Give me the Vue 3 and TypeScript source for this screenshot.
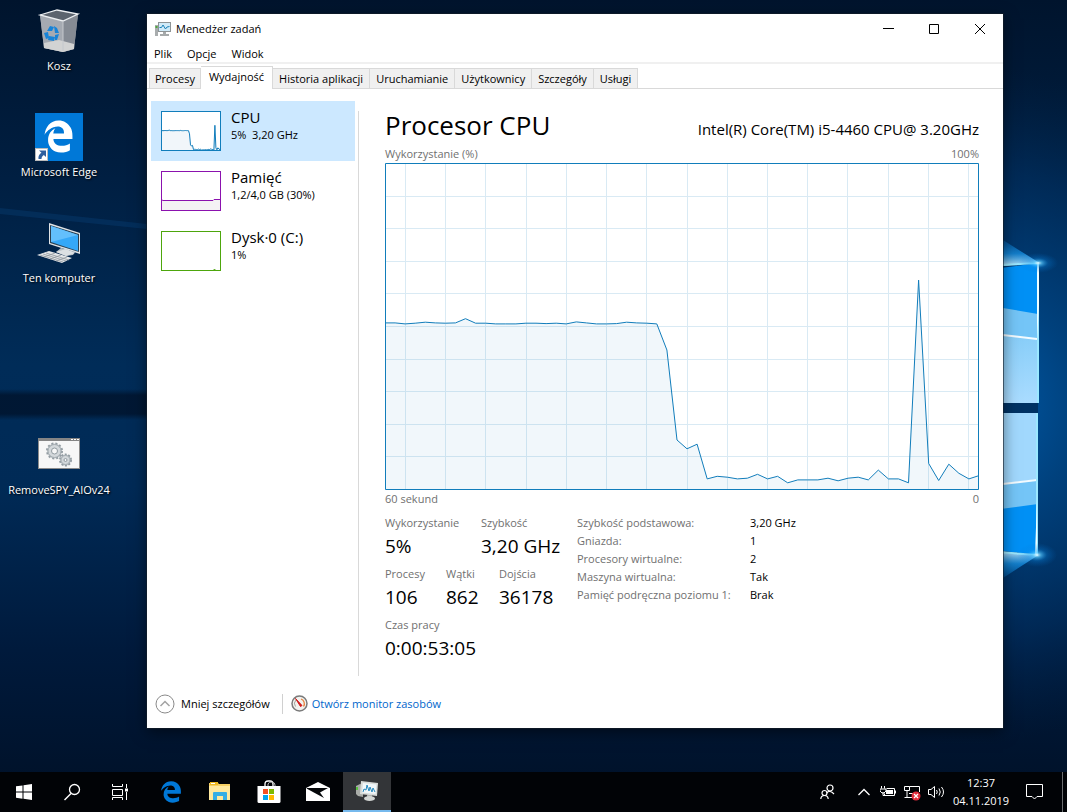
<script setup lang="ts">
import { ref } from 'vue'

interface Resource {
  name: string
  detail: string
  kind: 'cpu' | 'memory' | 'disk'
  line: string
  area: string
}

interface Stat {
  label: string
  value: string
}

const edgePath =
  'M486.286 243.671c0-44.032-7.754-84.465-28.801-122.405C416.498 47.879 343.912 8.001 258.893 8.001 118.962 7.724 40.617 113.214 26.056 227.679c42.429-61.312 117.073-121.376 220.375-124.966 0 0 109.666 0 99.419 104.957H169.997c6.369-37.386 18.554-58.986 34.339-78.926-75.048 34.893-121.85 96.096-120.742 188.315.83 71.448 50.124 144.836 120.743 171.976 83.357 31.843 192.776 7.2 240.132-21.321V363.307c-80.864 56.494-270.871 60.925-272.255-67.572h314.073v-52.064z'

const load: number[] = [
  51.1, 51.1, 50.8, 51, 51.3, 51.1, 51, 51.1, 52.4, 51, 51, 50.8, 50.8, 50.8, 51, 51, 50.9, 51, 50.8, 51.4,
  51.1, 50.8, 50.8, 50.9, 51.3, 51.1, 51, 50.8, 42.8, 15.3, 12.6, 14, 3.4, 4.2, 3.9, 3.4, 3.6, 4.8, 3.4, 4.2,
  2.2, 3.1, 3.1, 3.1, 3.6, 2.8, 3.6, 3.9, 3.1, 6.1, 3.4, 3.4, 2.2, 64.2, 8.1, 2.9, 7.9, 5.1, 3.4, 4.4,
]

function tracePoints(width: number, height: number): string {
  const step = width / (load.length - 1)
  return load.map((v, i) => `${(i * step).toFixed(1)},${(height - (v * height) / 100).toFixed(1)}`).join(' ')
}

const chartWidth = 594
const chartHeight = 327
const chartLine = tracePoints(chartWidth, chartHeight)
const chartArea = `0,${chartHeight} ${chartLine} ${chartWidth},${chartHeight}`
const columns = Array.from({ length: 15 }, (_, i) => 20 + Math.round(i * 40.22) + 0.5)
const rows = Array.from({ length: 9 }, (_, i) => Math.round((i + 1) * 32.6) + 0.5)

const thumbLine = tracePoints(60, 40)

const resources: Resource[] = [
  { name: 'CPU', detail: '5%  3,20 GHz', kind: 'cpu', line: thumbLine, area: `0,40 ${thumbLine} 60,40` },
  {
    name: 'Pamięć',
    detail: '1,2/4,0 GB (30%)',
    kind: 'memory',
    line: '0,28.5 2,29.5 52,29.5 53,28.5 60,28.5',
    area: '0,40 0,29 60,29 60,40',
  },
  { name: 'Dysk·0 (C:)', detail: '1%', kind: 'disk', line: '52,40 53.5,38 55,40', area: '52,40 53.5,38 55,40' },
]
const selected = ref(0)

const tabs = ['Procesy', 'Wydajność', 'Historia aplikacji', 'Uruchamianie', 'Użytkownicy', 'Szczegóły', 'Usługi']
const activeTab = ref('Wydajność')

const statRows: Stat[][] = [
  [
    { label: 'Wykorzystanie', value: '5%' },
    { label: 'Szybkość', value: '3,20 GHz' },
  ],
  [
    { label: 'Procesy', value: '106' },
    { label: 'Wątki', value: '862' },
    { label: 'Dojścia', value: '36178' },
  ],
  [{ label: 'Czas pracy', value: '0:00:53:05' }],
]

const facts: Stat[] = [
  { label: 'Szybkość podstawowa:', value: '3,20 GHz' },
  { label: 'Gniazda:', value: '1' },
  { label: 'Procesory wirtualne:', value: '2' },
  { label: 'Maszyna wirtualna:', value: 'Tak' },
  { label: 'Pamięć podręczna poziomu 1:', value: 'Brak' },
]
</script>

<template>
  <div class="screen">
    <svg class="wallpaper" viewBox="0 0 1067 812" preserveAspectRatio="xMaxYMid slice" aria-hidden="true">
      <defs>
        <linearGradient id="sky" x1="0" y1="0" x2="0" y2="1">
          <stop offset="0" stop-color="#00142d" />
          <stop offset="0.22" stop-color="#001f42" />
          <stop offset="0.45" stop-color="#002c58" />
          <stop offset="0.6" stop-color="#002a56" />
          <stop offset="0.8" stop-color="#001a3c" />
          <stop offset="1" stop-color="#001026" />
        </linearGradient>
        <radialGradient id="glow" gradientUnits="userSpaceOnUse" cx="960" cy="405" r="340">
          <stop offset="0" stop-color="#0061b4" />
          <stop offset="0.35" stop-color="#004584" stop-opacity="0.85" />
          <stop offset="0.7" stop-color="#003a74" stop-opacity="0.4" />
          <stop offset="1" stop-color="#002850" stop-opacity="0" />
        </radialGradient>
        <radialGradient id="flare">
          <stop offset="0" stop-color="#e8fcff" />
          <stop offset="0.2" stop-color="#56c8ff" stop-opacity="0.7" />
          <stop offset="0.5" stop-color="#0a8be8" stop-opacity="0.3" />
          <stop offset="1" stop-color="#0070d0" stop-opacity="0" />
        </radialGradient>
        <linearGradient id="beam" x1="0" y1="0" x2="0" y2="1">
          <stop offset="0" stop-color="#0080e0" stop-opacity="0" />
          <stop offset="0.6" stop-color="#1c9bf0" stop-opacity="0.7" />
          <stop offset="1" stop-color="#e0f8ff" />
        </linearGradient>
        <linearGradient id="beam-low" x1="0" y1="1" x2="0" y2="0">
          <stop offset="0" stop-color="#0080e0" stop-opacity="0" />
          <stop offset="0.6" stop-color="#1c9bf0" stop-opacity="0.7" />
          <stop offset="1" stop-color="#e0f8ff" />
        </linearGradient>
        <linearGradient id="pane" x1="0" y1="0" x2="0" y2="1">
          <stop offset="0" stop-color="#86cdf8" />
          <stop offset="1" stop-color="#aadcff" />
        </linearGradient>
        <linearGradient id="band" x1="0" y1="0" x2="0" y2="1">
          <stop offset="0" stop-color="#001128" stop-opacity="0" />
          <stop offset="0.2" stop-color="#001128" stop-opacity="0.75" />
          <stop offset="0.8" stop-color="#001128" stop-opacity="0.75" />
          <stop offset="1" stop-color="#001128" stop-opacity="0" />
        </linearGradient>
      </defs>
      <rect width="1067" height="812" fill="url(#sky)" />
      <rect width="1067" height="812" fill="url(#glow)" />
      <path d="M0 208 L147 224 L147 229 L0 214Z" fill="#0a4a86" opacity="0.3" />
      <path d="M0 389H147V420H0Z" fill="url(#band)" />
      <path d="M985 232 L1003 240 L1038 262 L985 268Z" fill="url(#beam)" />
      <path d="M985 586 L1003 578 L1037 556 L985 549Z" fill="url(#beam-low)" />
      <path d="M985 270 L1038 263 V403 H985Z" fill="#0090f5" />
      <path d="M985 305 L1038 314 V403 H985Z" fill="#74c5f7" />
      <path d="M985 332 L1038 339 V403 H985Z" fill="url(#pane)" />
      <path d="M985 333 L1037 339" stroke="#f3fbff" stroke-width="2" />
      <rect x="985" y="403" width="53" height="10" fill="#003263" />
      <path d="M985 413 H1038 V555 L985 549Z" fill="#0090f5" />
      <path d="M985 413 H1038 V504 L985 511Z" fill="#74c5f7" />
      <path d="M985 413 H1038 V479 L985 486Z" fill="#a1d8fd" />
      <path d="M985 486 L1037 480" stroke="#f3fbff" stroke-width="2" />
      <path d="M985 266 L1038 263 V403 M1037 413 V555 L985 551" fill="none" stroke="#9be8ff" stroke-width="2" />
      <path d="M1039 262 V305 L1037 340 V264Z M1037 555 V500 L1035 555Z" fill="#f0ffff" />
      <ellipse cx="1038" cy="263" rx="20" ry="10" fill="url(#flare)" />
      <ellipse cx="1037" cy="555" rx="20" ry="12" fill="url(#flare)" />
    </svg>

    <main class="desktop">
      <nav class="shortcuts" aria-label="Pulpit">
        <button class="shortcut" type="button">
          <svg width="48" height="48" viewBox="0 0 48 48">
            <path d="M5 8 L28 14 L43 7 L39 42 L28 45 L9 41Z" fill="#999fa8" />
            <path d="M5 8 L28 14 V45 L9 41Z" fill="#a5aab2" />
            <path d="M28 14 L43 7 L39 42 L28 45Z" fill="#858b94" />
            <path d="M5 8 L22 3 L43 7 L28 14Z" fill="#5b636e" />
            <path d="M9 36 L24 33 L39 37 V42 L28 45 L9 41Z" fill="#d2d3d3" />
            <path d="M5 8 L22 3 L43 7 L28 14Z" fill="none" stroke="#eceff2" stroke-width="1.3" />
            <path d="M28 14V44" stroke="#c4c8cd" />
            <path d="M12 24 L15 19 L19 20 L17 24Z M19 19 L22 21 L24 26 L20 26Z M9 26 L13 25 L14 31 L11 32Z M14 29 L20 30 L19 34 L13 33Z M20 28 L24 27 L22 33 L20 33Z" fill="#1683d8" />
          </svg>
          <span>Kosz</span>
        </button>
        <button class="shortcut" type="button">
          <svg width="48" height="48" viewBox="0 0 48 48">
            <rect width="48" height="48" fill="#0078d7" />
            <svg x="8" y="7" width="31" height="33" viewBox="0 0 512 512" preserveAspectRatio="none">
              <path :d="edgePath" fill="#fff" />
            </svg>
            <rect x="0.5" y="35.5" width="12" height="12" fill="#fff" stroke="#bbb" />
            <path d="M4 37.500 H11 V44 L8.800 42 C7 43.500 6.500 44.500 6.500 46 H3.500 C3 43 4.500 41 6.500 39.800Z" fill="#2e5f9e" />
          </svg>
          <span>Microsoft Edge</span>
        </button>
        <button class="shortcut" type="button">
          <svg width="48" height="48" viewBox="0 0 48 48">
            <path d="M14 4 L45 14 V35 L14 25Z" fill="#dfe3e6" />
            <path d="M15 6 L44 15 V33 L15 24Z" fill="#2b4052" />
            <path d="M16 7 L43 16 V32 L16 23Z" fill="#35a8f8" />
            <path d="M16 7 L43 16 L16 23Z" fill="#63bffc" />
            <path d="M26 29 L30 30 L40 33 L38 36 L31 37 L21 33Z" fill="#b9c0c5" />
            <path d="M21 33 L31 30 L40 34 L31 37Z" fill="#dce0e3" />
            <path d="M2 36 L14 32 L37 39 L27 44Z" fill="#e5e7e9" />
            <path d="M5 36 L28 43 M8 35 L31 42 M11 34 L34 41 M9 38 L20 34 M15 40 L26 36 M21 42 L32 38" stroke="#8f979d" stroke-width="0.8" />
          </svg>
          <span>Ten komputer</span>
        </button>
        <button class="shortcut last" type="button">
          <svg width="48" height="48" viewBox="0 0 48 48">
            <rect x="3.500" y="7.500" width="41" height="30" fill="#f7f7f7" stroke="#8c8c8c" />
            <path d="M3 7H45V10H3Z" fill="#858585" />
            <path d="M36 8h2v1h-2z M39 8h2v1h-2z M42 8h2v1h-2z" fill="#fff" />
            <circle cx="19.500" cy="20" r="7.500" fill="#c7cdd1" stroke="#949da3" stroke-width="2" stroke-dasharray="2 2" />
            <circle cx="19.500" cy="20" r="6.500" fill="#d3d8db" stroke="#a4acb1" />
            <circle cx="19.500" cy="20" r="3" fill="#f7f7f7" stroke="#929ba1" />
            <circle cx="30.500" cy="29" r="5.500" fill="#c7cdd1" stroke="#949da3" stroke-width="2" stroke-dasharray="2 1.500" />
            <circle cx="30.500" cy="29" r="4.500" fill="#d3d8db" stroke="#a4acb1" />
            <circle cx="30.500" cy="29" r="1.500" fill="#f7f7f7" stroke="#929ba1" />
          </svg>
          <span>RemoveSPY_AIOv24</span>
        </button>
      </nav>

      <section class="window" aria-label="Menedżer zadań">
        <header class="titlebar">
          <svg width="16" height="16" viewBox="0 0 16 16">
            <path d="M0 4h3v11H0z" fill="#a9adae" />
            <path d="M0.500 5h2v2h-2z" fill="#4ea83c" />
            <rect x="3.500" y="1.500" width="12" height="9" fill="#cfeaf8" stroke="#8e9496" />
            <path d="M4.500 6.500 L6.500 6.500 L8 4 L10.500 8 L12 6 L14.500 5.500" fill="none" stroke="#1b82b9" />
            <path d="M8 11h3v2h3v2H5v-2h3z" fill="#a6aaab" />
          </svg>
          <h1>Menedżer zadań</h1>
          <div class="controls">
            <button type="button" aria-label="Minimalizuj">
              <svg width="11" height="11" viewBox="0 0 11 11"><path d="M0 4.500H11" stroke="#000" /></svg>
            </button>
            <button type="button" aria-label="Maksymalizuj">
              <svg width="11" height="11" viewBox="0 0 11 11"><path d="M0.500 0.500H9.500V9.500H0.500Z" fill="none" stroke="#000" /></svg>
            </button>
            <button type="button" aria-label="Zamknij">
              <svg width="11" height="11" viewBox="0 0 11 11"><path d="M0 0L10 10M10 0L0 10" stroke="#000" /></svg>
            </button>
          </div>
        </header>

        <nav class="menubar">
          <button type="button">Plik</button>
          <button type="button">Opcje</button>
          <button type="button">Widok</button>
        </nav>

        <div class="tabs" role="tablist">
          <button
            v-for="tab in tabs"
            :key="tab"
            class="tab"
            :class="{ active: tab === activeTab }"
            type="button"
            role="tab"
            :aria-selected="tab === activeTab"
            @click="activeTab = tab"
          >
            {{ tab }}
          </button>
        </div>

        <div class="content">
          <div class="resources">
            <button
              v-for="(res, i) in resources"
              :key="res.name"
              class="resource"
              :class="[res.kind, { selected: i === selected }]"
              type="button"
              @click="selected = i"
            >
              <svg class="thumb" viewBox="0 0 60 40">
                <polygon class="area" :points="res.area" />
                <polyline class="trace" :points="res.line" />
                <rect class="frame" x="0.5" y="0.5" width="59" height="39" />
              </svg>
              <span class="texts">
                <span class="name">{{ res.name }}</span>
                <span class="detail">{{ res.detail }}</span>
              </span>
            </button>
          </div>

          <article class="performance">
            <header class="heading">
              <h2>Procesor CPU</h2>
              <span>Intel(R) Core(TM) i5-4460 CPU@ 3.20GHz</span>
            </header>
            <div class="scale"><span>Wykorzystanie (%)</span><span>100%</span></div>
            <svg class="chart" :viewBox="`0 0 ${chartWidth} ${chartHeight}`" preserveAspectRatio="none">
              <line v-for="x in columns" :key="`c${x}`" class="grid" :x1="x" :x2="x" y1="0" :y2="chartHeight" />
              <line v-for="y in rows" :key="`r${y}`" class="grid" x1="0" :x2="chartWidth" :y1="y" :y2="y" />
              <polygon class="load-area" :points="chartArea" />
              <polyline class="load-line" :points="chartLine" />
              <rect class="border" x="0.5" y="0.5" :width="chartWidth - 1" :height="chartHeight - 1" />
            </svg>
            <div class="scale"><span>60 sekund</span><span>0</span></div>

            <div class="figures">
              <div class="stats">
                <dl v-for="(row, i) in statRows" :key="i" class="stat-row" :class="`cells-${row.length}`">
                  <div v-for="stat in row" :key="stat.label">
                    <dt>{{ stat.label }}</dt>
                    <dd>{{ stat.value }}</dd>
                  </div>
                </dl>
              </div>
              <dl class="facts">
                <template v-for="fact in facts" :key="fact.label">
                  <dt>{{ fact.label }}</dt>
                  <dd>{{ fact.value }}</dd>
                </template>
              </dl>
            </div>
          </article>
        </div>

        <footer class="footer">
          <button class="less" type="button">
            <svg width="20" height="20" viewBox="0 0 20 20">
              <circle cx="10" cy="10" r="9" fill="#fff" stroke="#8a8a8a" />
              <path d="M5.500 12 L10 7.500 L14.500 12" fill="none" stroke="#a3a3a3" stroke-width="1.500" />
            </svg>
            <span>Mniej szczegółów</span>
          </button>
          <a class="monitor" href="#">
            <svg width="17" height="17" viewBox="0 0 17 17">
              <circle cx="8.500" cy="8.500" r="7.500" fill="#f2f2ee" stroke="#7a7a7a" stroke-width="1.500" />
              <path d="M4.500 11.500 A5 5 0 0 1 5 5" fill="none" stroke="#a3a39c" />
              <path d="M10 4 A5 5 0 0 1 12.500 11.500" fill="none" stroke="#e6803b" stroke-width="1.300" />
              <path d="M4.500 3.500 L9.500 11.500 L11 10.500Z" fill="#d11b1b" stroke="#d11b1b" />
            </svg>
            <span>Otwórz monitor zasobów</span>
          </a>
        </footer>
      </section>
    </main>

    <footer class="taskbar">
      <div class="launchers">
        <button type="button" aria-label="Start">
          <svg width="24" height="24" viewBox="0 0 24 24">
            <path d="M4 6.300 L10.500 5.400 V11.500 H4Z M11.500 5.200 L20 4 V11.500 H11.500Z M4 12.500 H10.500 V18.700 L4 17.800Z M11.500 12.500 H20 V20 L11.500 18.800Z" fill="#fff" />
          </svg>
        </button>
        <button type="button" aria-label="Wyszukaj">
          <svg width="24" height="24" viewBox="0 0 24 24">
            <circle cx="14.500" cy="9.500" r="5" fill="none" stroke="#fff" stroke-width="1.300" />
            <path d="M11 13.500 L4.500 20" stroke="#fff" stroke-width="1.500" />
          </svg>
        </button>
        <button type="button" aria-label="Widok zadań">
          <svg width="24" height="24" viewBox="0 0 24 24" fill="none" stroke="#fff">
            <path d="M4.500 4 V6.500 H14.500 V4 M4.500 9.500 H14.500 V15.500 H4.500Z M4.500 20 V17.500 H14.500 V20 M18.500 4 V8 M18.500 12 V20" />
            <path d="M17 8.500 H20 V11.500 H17Z" fill="#fff" stroke="none" />
          </svg>
        </button>
      </div>
      <div class="apps">
        <button type="button" aria-label="Microsoft Edge">
          <svg width="22" height="22" viewBox="0 0 512 512"><path :d="edgePath" fill="#0078d7" /></svg>
        </button>
        <button type="button" aria-label="Eksplorator plików">
          <svg width="24" height="24" viewBox="0 0 24 24">
            <path d="M1 3 H10 L11 4 H22 V20 H1Z" fill="#f6cf62" />
            <path d="M1 6 H22 V20 H1Z" fill="#ffe89d" />
            <path d="M2 2 H10 V5 H2Z" fill="#f0b91f" />
            <path d="M3 3 H7 V4 H3Z" fill="#fff" />
            <path d="M5 20 V13 Q5 12 6 12 H18 Q19 12 19 13 V20 H15 V16 H9 V20Z" fill="#35aee5" />
          </svg>
        </button>
        <button type="button" aria-label="Microsoft Store">
          <svg width="24" height="24" viewBox="0 0 24 24">
            <path d="M8 6 V4 Q8 1 11 1 H13 Q16 1 16 4 V6" fill="none" stroke="#fff" stroke-width="1.300" />
            <path d="M11 6 V4 Q12 1.500 15 2 Q18 2.500 18 5 V6" fill="none" stroke="#bbb" />
            <path d="M0.500 6 H23.500 V21.500 Q23.500 23 22 23 H2 Q0.500 23 0.500 21.500Z" fill="#fff" />
            <path d="M6 9h5v5H6z" fill="#f25022" />
            <path d="M12 9h5v5h-5z" fill="#7fba00" />
            <path d="M6 15h5v5H6z" fill="#00a4ef" />
            <path d="M12 15h5v5h-5z" fill="#ffb900" />
          </svg>
        </button>
        <button type="button" aria-label="Poczta">
          <svg width="24" height="24" viewBox="0 0 24 24">
            <path d="M0 8 L12 2 L24 8 L24 21 H0Z" fill="#fff" />
            <path d="M1 8 H22 L14 12.500 L18 18 L0.500 8.500Z" fill="#05070a" />
          </svg>
        </button>
        <button class="running" type="button" aria-label="Menedżer zadań">
          <svg width="24" height="24" viewBox="0 0 24 24">
            <path d="M1 7 L5 5 L8 6 V18 L3 17 L1 15Z" fill="#a9aca8" />
            <path d="M1 8h2v3H1z" fill="#57c23d" />
            <path d="M6 2 L23 4 L22 17 L5 15Z" fill="#d9dcda" />
            <path d="M8 4 L21.500 5.500 L20.500 15 L7 13.500Z" fill="#f0f7fa" />
            <path d="M8 13 L9 10 L11 11 L12 6 L14 12 L15 8 L17 13 L18 9 L20 13" fill="none" stroke="#2789bd" />
            <path d="M12 16h5v2h-5z" fill="#b0b3b1" />
            <ellipse cx="14.500" cy="19.500" rx="5.500" ry="2.500" fill="#d3d6d4" />
          </svg>
        </button>
      </div>

      <div class="tray">
        <button class="people" type="button" aria-label="Kontakty">
          <svg width="16" height="16" viewBox="0 0 16 16" fill="none" stroke="#fff" stroke-width="1.200">
            <circle cx="10" cy="4" r="3" />
            <path d="M6.500 9 Q10 5.500 14 10" />
            <circle cx="4.500" cy="9" r="2.500" />
            <path d="M0.800 15 Q1 11.500 4.500 11.500 Q8 11.500 8.200 15" />
          </svg>
        </button>
        <button type="button" aria-label="Pokaż ukryte ikony">
          <svg width="12" height="8" viewBox="0 0 12 8"><path d="M0.500 7 L6 1.500 L11.500 7" fill="none" stroke="#fff" stroke-width="1.300" /></svg>
        </button>
        <button type="button" aria-label="Bateria">
          <svg width="16" height="16" viewBox="0 0 16 16">
            <path d="M6.500 4.500 H14.500 V11.500 H4.500 V9.500 M15.500 6.500 V9.500" fill="none" stroke="#fff" />
            <path d="M6 6H13V10H6Z" fill="#fff" />
            <path d="M1.500 2V4.500 M4.500 2V4.500 M0 5H6V7L4 9H2L0 7Z" fill="none" stroke="#fff" />
            <path d="M3 8V11.500H5" fill="none" stroke="#fff" />
          </svg>
        </button>
        <button type="button" aria-label="Sieć">
          <svg width="17" height="17" viewBox="0 0 17 17">
            <path d="M0.500 2.500H5.500V6.500H0.500Z M5.500 2.500H15.500V8 M3 6.500V13.500H9 M0.500 13.500H4 M5 9.500H9" fill="none" stroke="#fff" />
            <circle cx="12" cy="12" r="4.500" fill="#e02d3c" />
            <path d="M10 10L14 14M14 10L10 14" stroke="#fff" stroke-width="1.300" />
          </svg>
        </button>
        <button type="button" aria-label="Głośność">
          <svg width="17" height="16" viewBox="0 0 17 16" fill="none" stroke="#fff">
            <path d="M0.500 5.500H3L6.500 2.500V13.500L3 10.500H0.500Z" />
            <path d="M8.500 6Q10 8 8.500 10 M11 4.500Q13.500 8 11 11.500 M13.500 3Q17.500 8 13.500 13" />
          </svg>
        </button>
        <div class="clock"><time>12:37</time><time>04.11.2019</time></div>
        <button class="action" type="button" aria-label="Centrum akcji">
          <svg width="17" height="16" viewBox="0 0 17 16"><path d="M0.500 0.500H16.500V12.500H11L8.500 15L6 12.500H0.500Z" fill="none" stroke="#fff" /></svg>
        </button>
      </div>
    </footer>
  </div>
</template>

<style>
body {
  margin: 0;
}
</style>

<style scoped>
.screen {
  position: relative;
  display: flex;
  flex-direction: column;
  min-height: 100vh;
  overflow: hidden;
  background: #001c3d;
  color: #000;
  font: 11px/18px 'Open Sans', 'Noto Sans', sans-serif;
}

.wallpaper {
  position: absolute;
  inset: 0;
  width: 100%;
  height: 100%;
}

button {
  margin: 0;
  padding: 0;
  border: 0;
  background: none;
  color: inherit;
  font: inherit;
}

svg {
  display: block;
  flex-shrink: 0;
}

h1,
h2,
dl,
dd {
  margin: 0;
  font-weight: 400;
}

.desktop {
  position: relative;
  display: flex;
  flex: 1;
}

.shortcuts {
  display: grid;
  grid-template-rows: repeat(5, 106px);
  align-content: start;
  width: 147px;
}

.shortcut {
  display: flex;
  flex-direction: column;
  align-items: center;
  width: 118px;
  padding-top: 7px;
  gap: 2px;
  color: #fff;
  text-shadow: 1px 1px 2px #000;
}

.shortcut.last {
  grid-row: 5;
}

.window {
  display: flex;
  flex: 1;
  flex-direction: column;
  min-width: 0;
  margin: 14px 64px 44px 0;
  background: #fff;
  box-shadow: 0 0 0 1px rgb(20 30 40 / 60%), 0 4px 14px rgb(0 0 0 / 50%);
}

.titlebar {
  display: flex;
  align-items: center;
  height: 30px;
  padding-left: 8px;
  gap: 5px;
}

h1 {
  flex: 1;
  font-size: 11px;
}

.controls {
  display: flex;
}

.controls button {
  display: grid;
  place-items: center;
  width: 46px;
  height: 28px;
}

.menubar {
  display: flex;
  height: 18px;
  padding: 0 7px;
  gap: 15px;
  border-bottom: 2px solid #f0f0f0;
}

.menubar button {
  line-height: 20px;
}

.tabs {
  display: flex;
  align-items: flex-end;
  height: 24px;
  padding-left: 2px;
  border-bottom: 1px solid #d9d9d9;
}

.tab {
  height: 20px;
  padding: 0 6px;
  border: 1px solid #d9d9d9;
  border-width: 1px 1px 0 0;
  background: #f0f0f0;
  white-space: nowrap;
}

.tab:first-child {
  padding: 0 5px;
  border-left-width: 1px;
}

.tab.active {
  height: 23px;
  padding: 0 8px 2px;
  margin-bottom: -1px;
  background: #fff;
}

.content {
  display: flex;
  flex: 1;
  padding: 12px 24px 0 4px;
}

.resources {
  width: 204px;
}

.resource {
  display: flex;
  width: 100%;
  height: 60px;
  padding: 10px;
  gap: 10px;
  text-align: left;
}

.selected {
  background: #cce8ff;
}

.thumb {
  width: 60px;
  height: 40px;
  background: #fff;
}

.texts {
  display: flex;
  flex-direction: column;
  margin-top: -3px;
}

.name {
  font-size: 15px;
  line-height: 19px;
}

.detail {
  line-height: 16px;
  white-space: pre;
}

.frame,
.trace {
  fill: none;
  stroke: currentcolor;
}

.area {
  fill: #f1f6fa;
}

.cpu .thumb {
  color: #117dbb;
}

.memory .thumb {
  color: #8b12ae;
}

.memory .area {
  fill: #f4f2f4;
}

.disk .thumb {
  color: #4da60c;
}

.performance {
  display: flex;
  flex: 1;
  flex-direction: column;
  min-width: 0;
  margin: 10px 0 0 3px;
  padding-left: 26px;
  border-left: 1px solid #d9d9d9;
}

.heading {
  display: flex;
  align-items: baseline;
  justify-content: space-between;
  height: 34px;
}

h2 {
  font-size: 26px;
  line-height: 28px;
}

.heading span {
  font-size: 15px;
}

.scale {
  display: flex;
  justify-content: space-between;
  color: #707070;
}

.chart {
  flex: 1;
  width: 100%;
  height: 0;
  min-height: 200px;
}

.grid {
  stroke: #d9eaf4;
}

.load-area {
  fill: rgb(17 125 187 / 6%);
}

.load-line,
.border {
  fill: none;
  stroke: #117dbb;
  vector-effect: non-scaling-stroke;
}

.figures {
  display: flex;
  height: 168px;
  padding-top: 6px;
  box-sizing: border-box;
}

.stats {
  width: 192px;
}

.stat-row {
  display: grid;
  height: 51px;
}

.cells-2 {
  grid-template-columns: 96px 1fr;
}

.cells-3 {
  grid-template-columns: 61px 53px 1fr;
}

dt {
  color: #707070;
  white-space: nowrap;
}

.stat-row dd {
  font-size: 19px;
  line-height: 28px;
  white-space: nowrap;
}

.facts {
  display: grid;
  grid-template-columns: 173px auto;
  align-content: start;
}

.footer {
  display: flex;
  align-items: center;
  height: 49px;
  padding: 3px 8px 0;
}

.less,
.monitor {
  display: flex;
  align-items: center;
  gap: 6px;
}

.less {
  padding-right: 12px;
  border-right: 1px solid #d0d0d0;
}

.monitor {
  padding-left: 8px;
  gap: 4px;
  color: #0066cc;
  text-decoration: none;
}

.taskbar {
  position: relative;
  display: flex;
  height: 40px;
  background: #010306;
  color: #fff;
}

.launchers,
.apps,
.tray {
  display: flex;
}

.launchers button,
.apps button {
  display: grid;
  place-items: center;
  width: 48px;
  height: 40px;
}

.apps {
  margin-left: 3px;
  gap: 1px;
}

.apps .running {
  border-bottom: 2px solid #76b9ed;
  background: #333538;
}

.tray {
  align-items: center;
  margin-left: auto;
  margin-right: 4px;
  padding-right: 8px;
  border-right: 1px solid #6b6d70;
}

.tray button {
  display: grid;
  place-items: center;
  width: 24px;
}

.tray .people {
  width: 48px;
}

.clock {
  display: flex;
  flex-direction: column;
  align-items: center;
  width: 66px;
}

.tray .action {
  width: 40px;
}
</style>
